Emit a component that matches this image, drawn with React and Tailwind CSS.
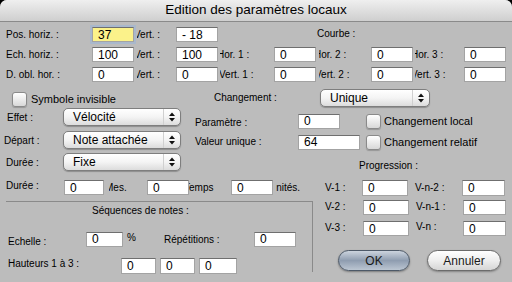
import React from "react";

const Field = ({ w, v, yellow, h = "h-[15px]" }) => (
  <div
    className={`${w} ${h} shrink-0 flex items-center pl-[5px] text-[12px] leading-none border border-[#a3a3a3] border-t-[#6f6f6f] ${
      yellow ? "bg-[#fbf28a] outline outline-[2px] outline-[#a9b8cc]" : "bg-white"
    }`}
  >
    {v}
  </div>
);

const Clip = ({ w, off, t }) => (
  <div className={`${w} shrink-0 overflow-hidden whitespace-nowrap`}>
    <span className={`inline-block ${off}`}>{t}</span>
  </div>
);

const Arrows = () => (
  <svg width="6" height="10" viewBox="0 0 6 10">
    <path d="M0 4 L3 0.5 L6 4 Z" fill="#111" />
    <path d="M0 6 L3 9.5 L6 6 Z" fill="#111" />
  </svg>
);

const Popup = ({ w, t }) => (
  <div
    className={`${w} h-[18px] shrink-0 flex rounded-[5px] border border-[#7e7e7e] bg-gradient-to-b from-[#ffffff] via-[#f4f4f4] to-[#dcdcdc] shadow-[0_1px_1px_rgba(0,0,0,0.25)]`}
  >
    <div className="flex-1 flex items-center pl-[9px] text-[12px] leading-none">{t}</div>
    <div className="w-[17px] flex items-center justify-center border-l border-[#d0d0d0]">
      <Arrows />
    </div>
  </div>
);

const Check = () => (
  <div className="w-[15px] h-[15px] shrink-0 rounded-[3px] border border-[#8a8a8a] bg-gradient-to-b from-[#ffffff] to-[#d8d8d8] shadow-[0_1px_1px_rgba(0,0,0,0.2)]" />
);

export default function App() {
  return (
    <div className="w-[512px] h-[282px] bg-black overflow-hidden">
      <div className="w-full h-full bg-[#bcbcbc] rounded-t-[7px] overflow-hidden flex flex-col font-['Liberation_Sans',Arial,sans-serif] text-[10px] text-black">
        <div className="h-[22px] shrink-0 bg-gradient-to-b from-[#efefef] to-[#cfcfcf] border-b border-[#8a8a8a] flex items-center justify-center text-[13.5px] font-['Liberation_Sans',Arial,sans-serif]">
          Edition des paramètres locaux
        </div>

        {/* Row 1 */}
        <div className="mt-[5px] h-[15px] flex items-center">
          <div className="w-[92px] pl-[6px] shrink-0">Pos. horiz. :</div>
          <Field w="w-[42px]" v="37" yellow />
          <div className="w-[3px] shrink-0" />
          <Clip w="w-[39px]" off="-ml-[3px]" t="Vert. :" />
          <Field w="w-[42px]" v="- 18" />
          <div className="w-[99px] shrink-0" />
          <div className="shrink-0 -mt-[3px] whitespace-nowrap">Courbe :</div>
        </div>

        {/* Row 2 */}
        <div className="mt-[5px] h-[15px] flex items-center">
          <div className="w-[92px] pl-[6px] shrink-0">Ech. horiz. :</div>
          <Field w="w-[42px]" v="100" />
          <div className="w-[3px] shrink-0" />
          <Clip w="w-[39px]" off="-ml-[3px]" t="Vert. :" />
          <Field w="w-[42px]" v="100" />
          <div className="w-[2px] shrink-0" />
          <Clip w="w-[54px]" off="-ml-[3px]" t="Hor. 1 :" />
          <Field w="w-[42px]" v="0" />
          <div className="w-[3px] shrink-0" />
          <Clip w="w-[52px]" off="-ml-[5px]" t="Hor. 2 :" />
          <Field w="w-[42px]" v="0" />
          <div className="w-[2px] shrink-0" />
          <Clip w="w-[49px]" off="-ml-[4px]" t="Hor. 3 :" />
          <Field w="w-[42px]" v="0" />
        </div>

        {/* Row 3 */}
        <div className="mt-[5px] h-[15px] flex items-center">
          <div className="w-[92px] pl-[6px] shrink-0">D. obl. hor. :</div>
          <Field w="w-[42px]" v="0" />
          <div className="w-[3px] shrink-0" />
          <Clip w="w-[39px]" off="-ml-[3px]" t="Vert. :" />
          <Field w="w-[42px]" v="0" />
          <div className="w-[2px] shrink-0" />
          <Clip w="w-[54px]" off="-ml-[1px]" t="Vert. 1 :" />
          <Field w="w-[42px]" v="0" />
          <div className="w-[3px] shrink-0" />
          <Clip w="w-[52px]" off="-ml-[4px]" t="Vert. 2 :" />
          <Field w="w-[42px]" v="0" />
          <div className="w-[2px] shrink-0" />
          <Clip w="w-[49px]" off="-ml-[4px]" t="Vert. 3 :" />
          <Field w="w-[42px]" v="0" />
        </div>

        {/* Middle */}
        <div className="flex h-[98px] shrink-0">
          <div className="w-[195px] shrink-0 flex flex-col">
            <div className="mt-[10px] h-[15px] flex items-center pl-[12px]">
              <Check />
              <span className="ml-[4px] text-[11px]">Symbole invisible</span>
            </div>
            <div className="mt-[1px] h-[18px] flex items-center">
              <div className="w-[63px] pl-[7px] shrink-0">Effet :</div>
              <Popup w="w-[118px]" t="Vélocité" />
            </div>
            <div className="mt-[5px] h-[18px] flex items-center">
              <div className="w-[63px] pl-[4px] shrink-0">Départ :</div>
              <Popup w="w-[118px]" t="Note attachée" />
            </div>
            <div className="mt-[4px] h-[18px] flex items-center">
              <div className="w-[63px] pl-[6px] shrink-0">Durée :</div>
              <Popup w="w-[118px]" t="Fixe" />
            </div>
          </div>
          <div className="flex-1 flex flex-col">
            <div className="mt-[7px] h-[18px] flex items-center">
              <div className="w-[125px] pl-[19px] shrink-0 -mt-[2px]">Changement :</div>
              <Popup w="w-[110px]" t="Unique" />
            </div>
            <div className="mt-[6px] h-[16px] flex items-center">
              <div className="w-[103px] shrink-0 pt-[2px]">Paramètre :</div>
              <Field w="w-[42px]" v="0" />
              <div className="ml-[26px]">
                <Check />
              </div>
              <span className="ml-[3px] text-[11px]">Changement local</span>
            </div>
            <div className="mt-[5px] h-[16px] flex items-center">
              <div className="w-[103px] shrink-0 -mt-[2px]">Valeur unique :</div>
              <Field w="w-[62px]" v="64" />
              <div className="ml-[6px]">
                <Check />
              </div>
              <span className="ml-[3px] text-[11px]">Changement relatif</span>
            </div>
            <div className="mt-[8px] pl-[164px]">Progression :</div>
          </div>
        </div>

        {/* Row 8 */}
        <div className="h-[15px] flex items-center">
          <div className="w-[64px] pl-[6px] shrink-0 -mt-[5px]">Durée :</div>
          <Field w="w-[40px]" v="0" />
          <div className="w-[5px] shrink-0" />
          <Clip w="w-[38px]" off="-ml-[4px]" t="Mes." />
          <Field w="w-[42px]" v="0" />
          <Clip w="w-[42px]" off="-ml-[5px]" t="Temps" />
          <Field w="w-[42px]" v="0" />
          <div className="w-[3px] shrink-0" />
          <Clip w="w-[49px]" off="-ml-[7px]" t="Unités." />
          <div className="w-[37px] shrink-0">V-1 :</div>
          <Field w="w-[46px]" v="0" h="h-[16px]" />
          <div className="w-[54px] pl-[7px] shrink-0">V-n-2 :</div>
          <Field w="w-[43px]" v="0" h="h-[16px]" />
        </div>

        {/* Bottom */}
        <div className="flex flex-1">
          <div className="ml-[6px] mt-[6px] w-[307px] h-[71px] shrink-0 border-t border-r border-[#8a8a8a] flex flex-col">
            <div className="pl-[86px] mt-[1px]">Séquences de notes :</div>
            <div className="mt-[13px] h-[16px] flex items-center">
              <div className="w-[80px] pl-[2px] shrink-0 pt-[4px]">Echelle :</div>
              <Field w="w-[37px]" v="0" />
              <div className="w-[41px] pl-[4px] shrink-0 -mt-[4px]">%</div>
              <div className="w-[90px] shrink-0">Répétitions :</div>
              <Field w="w-[42px]" v="0" />
            </div>
            <div className="mt-[11px] h-[17px] flex items-center">
              <div className="w-[115px] pl-[2px] shrink-0 -mt-[5px]">Hauteurs 1 à 3 :</div>
              <Field w="w-[35px]" v="0" h="h-[16px]" />
              <div className="w-[4px] shrink-0" />
              <Field w="w-[35px]" v="0" h="h-[16px]" />
              <div className="w-[4px] shrink-0" />
              <Field w="w-[38px]" v="0" h="h-[16px]" />
            </div>
          </div>
          <div className="flex-1 flex flex-col">
            <div className="mt-[5px] h-[15px] flex items-center">
              <div className="w-[50px] pl-[12px] shrink-0 -mt-[3px]">V-2 :</div>
              <Field w="w-[46px]" v="0" />
              <div className="w-[54px] pl-[7px] shrink-0 -mt-[3px]">V-n-1 :</div>
              <Field w="w-[43px]" v="0" />
            </div>
            <div className="mt-[6px] h-[15px] flex items-center">
              <div className="w-[50px] pl-[12px] shrink-0 -mt-[3px]">V-3 :</div>
              <Field w="w-[46px]" v="0" />
              <div className="w-[54px] pl-[7px] shrink-0 -mt-[5px]">V-n :</div>
              <Field w="w-[43px]" v="0" />
            </div>
            <div className="mt-[14px] flex items-center">
              <div className="ml-[25px] w-[72px] h-[21px] rounded-full border border-[#4d5968] bg-gradient-to-b from-[#ccd4de] via-[#8f9db0] to-[#bcc6d2] shadow-[0_1px_2px_rgba(0,0,0,0.35)] flex items-center justify-center text-[12px] font-['Liberation_Sans',sans-serif] text-[#1a1a1a]">
                OK
              </div>
              <div className="ml-[17px] w-[74px] h-[21px] rounded-full border border-[#6b6b6b] bg-gradient-to-b from-[#ffffff] via-[#eeeeee] to-[#d6d6d6] shadow-[0_1px_2px_rgba(0,0,0,0.3)] flex items-center justify-center text-[12px] font-['Liberation_Sans',sans-serif] text-[#1a1a1a]">
                Annuler
              </div>
            </div>
          </div>
        </div>
      </div>
    </div>
  );
}
